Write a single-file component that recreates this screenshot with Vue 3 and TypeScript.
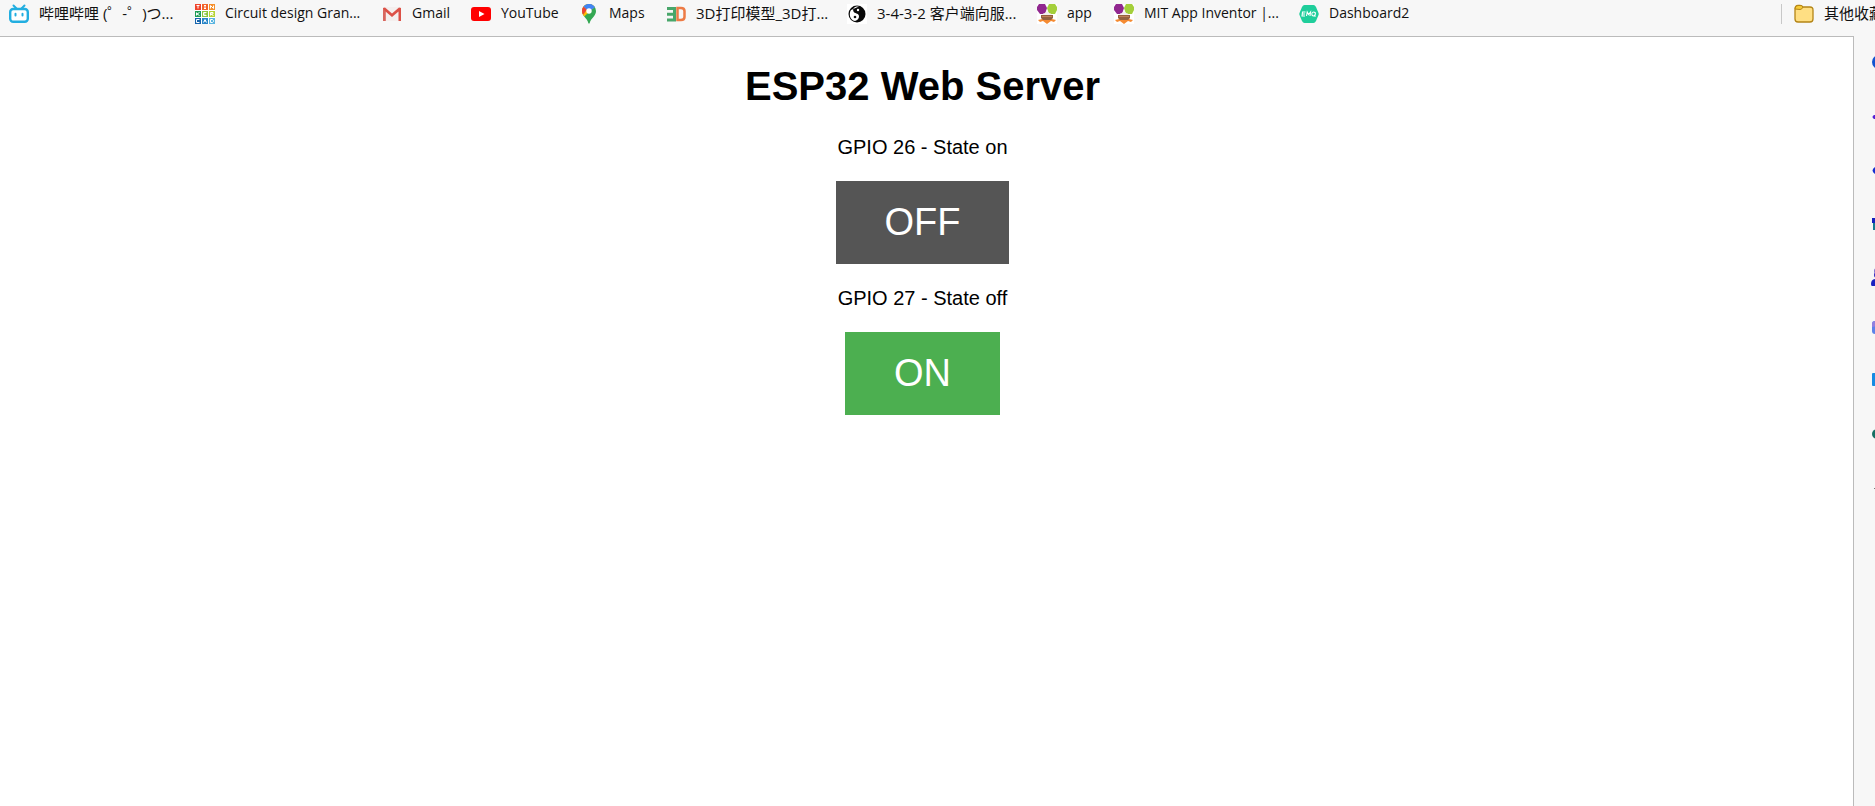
<script setup lang="ts">
import { ref } from 'vue'

interface Bookmark {
  icon: string
  label: string
  cjk?: boolean
}

interface Output {
  pin: number
  on: boolean
}

const bookmarks: Bookmark[] = [
  { icon: 'bili', label: '哔哩哔哩 (゜-゜)つ...', cjk: true },
  { icon: 'tinkercad', label: 'Circuit design Gran...' },
  { icon: 'gmail', label: 'Gmail' },
  { icon: 'youtube', label: 'YouTube' },
  { icon: 'maps', label: 'Maps' },
  { icon: 'print', label: '3D打印模型_3D打...', cjk: true },
  { icon: 'taiji', label: '3-4-3-2 客户端向服...', cjk: true },
  { icon: 'inventor', label: 'app' },
  { icon: 'inventor', label: 'MIT App Inventor |...' },
  { icon: 'emq', label: 'Dashboard2' },
]

const tiles = [
  '#f0432b', '#f2642c', '#f5902d',
  '#1f9d55', '#8cc63f', '#b5d334',
  '#1765ad', '#2a86c8', '#5bb5e0',
]
const tileMarks = [
  'M2 2h3M3.5 2v3', 'M2.5 2h2M3.5 2v3M2.5 5h2', 'M2 5V2l3 3V2',
  'M2 2v3M5 2L2.5 3.5 5 5', 'M5 2H2v3h3M2 3.5h2', 'M2 5V2h2.500v1.500H2L5 5',
  'M5 2H2v3h3', 'M2 5l1.500-3L5 5M3 4h1', 'M2 2v3h2l1-1V3L4 2z',
]

const tools = ['Search', 'Shopping', 'Tools', 'Games', 'People', 'Office', 'Outlook', 'Drop', 'Customize']

const outputs = ref<Output[]>([
  { pin: 26, on: true },
  { pin: 27, on: false },
])
</script>

<template>
  <div class="browser">
    <nav class="bar" aria-label="Bookmarks">
      <div class="bookmarks">
        <a v-for="item in bookmarks" :key="item.label" class="bookmark" :class="{ cjk: item.cjk }" href="#">
          <svg class="icon" viewBox="0 0 20 20" aria-hidden="true">
            <g v-if="item.icon === 'bili'" fill="none" stroke="#22aee0" stroke-linecap="round">
              <path d="M4.500 1.500l3 3M15.500 1.500l-3 3" stroke-width="2" />
              <rect x="1.200" y="5" width="17.600" height="12.700" rx="3" stroke-width="2.400" fill="#fff" />
              <path d="M6.500 9.800v1.700M13.500 9.800v1.700" stroke-width="2" />
            </g>
            <template v-else-if="item.icon === 'tinkercad'">
              <rect width="20" height="20" fill="#fff" />
              <g v-for="(color, i) in tiles" :key="color" :transform="`translate(${(i % 3) * 7} ${Math.floor(i / 3) * 7})`">
                <rect width="6" height="6" :fill="color" />
                <path :d="tileMarks[i]" transform="translate(-.5 -.5)" fill="none" stroke="#fff" stroke-width="1" />
              </g>
            </template>
            <template v-else-if="item.icon === 'gmail'">
              <path d="M1 3h18v14H1z" fill="#f4efee" />
              <path d="M1 4v13h2.500V7.500L10 13l6.500-5.500V17H19V4l-2-.5-7 6-7-6z" fill="#dc5147" />
              <path d="M1 4v13h2.500V7.500z" fill="#d8675f" />
            </template>
            <template v-else-if="item.icon === 'youtube'">
              <rect y="3" width="20" height="14" rx="3" fill="#f00" />
              <path d="M8 7l5.500 3L8 13z" fill="#fff" />
            </template>
            <template v-else-if="item.icon === 'maps'">
              <path d="M10 0a7 7 0 0 0-7 7c0 2 .8 3.700 2 5.200C7 14.500 8.800 16.200 9.300 19q.7 1.500 1.400 0c.5-2.800 2.300-4.500 4.300-6.800 1.200-1.500 2-3.200 2-5.200a7 7 0 0 0-7-7z" fill="#34a853" />
              <path d="M4.500 2.500A7 7 0 0 1 15.700 2.900L5.200 12.400C4 10.800 3 9.200 3 7q0-2.500 1.500-4.500z" fill="#fbbc04" />
              <path d="M4.500 2.500L8 5.500 4.200 10.800Q3 9.200 3 7q0-2.500 1.500-4.500z" fill="#ea4335" />
              <path d="M4.500 2.500A7 7 0 0 1 16 3.300L12.200 6 8 5.700z" fill="#4285f4" />
              <circle cx="10" cy="7" r="2.700" fill="#fff" />
            </template>
            <g v-else-if="item.icon === 'print'" fill="none">
              <path d="M1 4.500h7.500v11.500H1M1 10.200h7" stroke="#48a66a" stroke-width="3" />
              <path d="M11.500 4h3.500q3.500 0 3.500 3v6q0 3-3.500 3h-3.500z" stroke="#ed7b45" stroke-width="2.500" />
            </g>
            <template v-else-if="item.icon === 'taiji'">
              <rect width="20" height="20" fill="#fff" />
              <circle cx="10" cy="10" r="8.500" fill="#080808" />
              <path d="M12 2.500C7 2 5.500 4.500 6.500 7.500c1 2 5 1.500 5.500 4.500.2 2.500-1.500 4.500-4 5C3 16 1.500 10 4 6z" fill="#fff" />
              <circle cx="11" cy="6" r="1.200" fill="#fff" />
              <circle cx="8" cy="13" r="1.300" fill="#111" />
            </template>
            <template v-else-if="item.icon === 'inventor'">
              <rect width="20" height="20" fill="#fff" />
              <path d="M2 0h6l2 4-2 6H3L0 6V3z" fill="#91278f" />
              <path d="M12 0h6l2 3v3l-2 4h-6l-2-6z" fill="#a4cf3b" />
              <path d="M1 16l4-1h10l4 1-2 2-3-1-4 3-4-3-3 1z" fill="#f58b32" />
              <path d="M5 11q1-2 3-2l2-2 2 2q2 0 3 2z" fill="#f4efed" />
              <path d="M4 11h12v3l-2 2H6l-2-2z" fill="#94613f" />
              <path d="M5 12.500h10" stroke="#c08058" />
            </template>
            <template v-else>
              <path d="M5.500 1h9Q16 1 17 3l2.500 6q.5 1 0 2L17 17q-1 2-2.500 2h-9Q4 19 3 17L.5 11q-.5-1 0-2L3 3q1-2 2.500-2z" fill="#1fce9b" />
              <path d="M6.500 8h-3L3 12h3M3.500 10h2.500M7.500 12l.7-4 1.300 2.500L11.500 8 11 12M14.500 8q-1.700 0-1.700 2t1.700 2 1.900-2-1.900-2M15 11l1.500 1.500" fill="none" stroke="#fff" stroke-width="1.100" />
            </template>
          </svg>
          <span>{{ item.label }}</span>
        </a>
      </div>
      <a class="bookmark cjk others" href="#">
        <svg class="icon" viewBox="0 0 20 20" aria-hidden="true">
          <path d="M1 5v10q0 3 3 3h12q3 0 3-3V6q0-3-3-3H9Q8 1.500 6 1.500H4Q1 1.500 1 5z" fill="#ffdf83" stroke="#b48516" stroke-width="1.300" />
          <path d="M1 5q0-3.500 3-3.500h2Q8 1.500 9 3q-1 2.500-3 2.500z" fill="#f8cc37" stroke="#b48516" />
        </svg>
        <span>其他收藏夹</span>
      </a>
    </nav>

    <div class="body">
      <main class="page">
        <h1>ESP32 Web Server</h1>
        <section v-for="output in outputs" :key="output.pin" class="output">
          <p>GPIO {{ output.pin }} - State {{ output.on ? 'on' : 'off' }}</p>
          <button type="button" class="toggle" :class="{ dark: output.on }" @click="output.on = !output.on">
            {{ output.on ? 'OFF' : 'ON' }}
          </button>
        </section>
      </main>
      <aside class="sidebar">
        <button v-for="(tool, i) in tools" :key="tool" type="button" :aria-label="tool">
          <svg viewBox="0 0 24 24" aria-hidden="true">
            <circle v-if="i === 0" cx="9" cy="11" r="7" fill="#1254d1" />
            <path v-else-if="i === 1" d="M4 11h16v4H4q-3-2 0-4z" fill="#5320d4" />
            <path v-else-if="i === 2" d="M5 10l6-6 8 8-8 8-6-3q-5-3.500 0-7z" fill="#152fd0" />
            <template v-else-if="i === 3">
              <path d="M2 8h20v5H2z" fill="#1420bd" />
              <path d="M3 13h19v7H3z" fill="#167b91" />
            </template>
            <template v-else-if="i === 4">
              <circle cx="7" cy="8" r="3" fill="#7d6bcb" />
              <circle cx="7" cy="12" r="3" fill="#2a22bb" />
              <path d="M1 21q0-5 5-5h16v7H2q-1 0-1-2z" fill="#1b20c0" />
            </template>
            <template v-else-if="i === 5">
              <rect x="2" y="5" width="20" height="13" rx="3" fill="#5c82e9" />
              <path d="M2 11V8q0-3 3-3h17v2z" fill="#9180df" />
            </template>
            <rect v-else-if="i === 6" x="2" y="4" width="20" height="13" rx="1" fill="#168be3" />
            <circle v-else-if="i === 7" cx="7" cy="12" r="5" fill="#167064" />
            <path v-else d="M4 13.500h16" stroke="#777" stroke-width="1" />
          </svg>
        </button>
      </aside>
    </div>
  </div>
</template>

<style>
body {
  margin: 0;
}
</style>

<style scoped>
.browser {
  display: flex;
  flex-direction: column;
  min-height: 100vh;
  background: #f7f7f7;
  color: #000;
  overflow: hidden;
}

.bar {
  display: flex;
  justify-content: space-between;
  height: 36px;
  box-sizing: border-box;
  padding: 4px 0 12px 9px;
  font: 14px/18px "Open Sans", "Noto Sans CJK SC", sans-serif;
}

.bookmarks {
  display: grid;
  grid-template-columns: 186px 187px 89px 108px 87px 181px 190px 77px 185px 130px;
}

.bookmark {
  display: flex;
  gap: 10px;
  color: #111;
  text-decoration: none;
  white-space: nowrap;
}

.cjk {
  font-size: 15px;
}

.icon {
  flex: none;
  width: 20px;
  height: 20px;
}

.others {
  flex: 0 0 81px;
  width: 81px;
  padding-left: 12px;
  border-left: 1px solid #c8c8c8;
  overflow: hidden;
}

.body {
  display: flex;
  flex: 1;
}

.page {
  flex: 1;
  padding: 26px 8px 26px 0;
  border: solid #bbb;
  border-width: 1px 1px 0 0;
  background: #fff;
  font-family: "Liberation Sans", Arial, sans-serif;
  text-align: center;
}

h1 {
  margin: 0 0 27px;
  font-size: 40px;
  line-height: 46px;
}

.output {
  display: flex;
  flex-direction: column;
  align-items: center;
  gap: 22px;
  margin-bottom: 23px;
}

p {
  margin: 0;
  font-size: 20px;
  line-height: 23px;
}

.toggle {
  padding: 20px 49px;
  border: 0;
  background: #4caf50;
  color: #fff;
  font: 38px/43px "Liberation Sans", Arial, sans-serif;
  cursor: pointer;
}

.dark {
  background: #555;
}

.sidebar {
  display: flex;
  flex: 0 0 21px;
  width: 21px;
  flex-direction: column;
  align-items: flex-start;
  overflow: hidden;
}

.sidebar button {
  display: flex;
  align-items: center;
  height: 53px;
  padding: 0 0 0 16px;
  border: 0;
  background: none;
}

.sidebar svg {
  flex: none;
  width: 24px;
  height: 24px;
}
</style>
